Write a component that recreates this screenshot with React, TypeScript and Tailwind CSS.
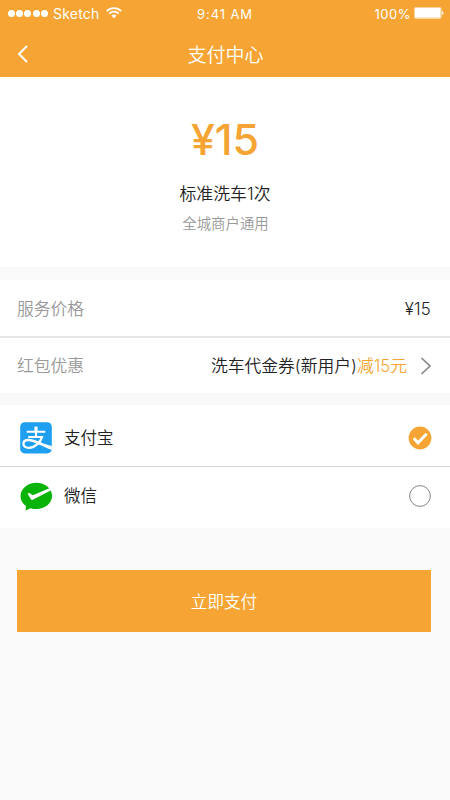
import type { ReactNode } from "react";

function Wifi() {
  return (
    <svg width="16" height="12" viewBox="0 0 16 12" fill="none" stroke="#fff" strokeWidth="1.8">
      <path d="M0.8 4.1a10.2 10.2 0 0 1 14.4 0" />
      <path d="M3.2 6.7a6.8 6.8 0 0 1 9.6 0" />
      <path d="M8 11.2 5.5 8.8a3.6 3.6 0 0 1 5 0z" fill="#fff" stroke="none" />
    </svg>
  );
}

function Battery() {
  return (
    <svg width="30" height="12" viewBox="0 0 30 12">
      <rect x="0.4" y="0.4" width="26.8" height="11" rx="1.6" fill="none" stroke="#fff" strokeWidth="0.8" opacity="0.75" />
      <rect x="1" y="1" width="25.6" height="9.8" rx="0.8" fill="#fff" />
      <path d="M28.1 4v4a2.1 2.1 0 0 0 0-4z" fill="#fff" />
    </svg>
  );
}

function Alipay() {
  return (
    <svg width="32" height="32" viewBox="0 0 32 32" fill="none">
      <rect x="0.2" y="0.2" width="31.6" height="31.2" rx="4.5" fill="#1f9ff0" />
      <path d="M6.7 9.8h18.6M8.2 15h14.4M16 9.8V15" stroke="#fff" strokeWidth="2.1" />
      <path d="M16 4.6v5.4" stroke="#fff" strokeWidth="3.2" />
      <path d="M22.4 14C21 19.4 15.4 25.8 8.8 25.8c-3.6 0-5.4-1.8-5.4-4 0-2.4 2.1-3.8 4.9-3.8 4 0 8.4 2 13.6 4.3" stroke="#fff" strokeWidth="2.3" />
      <path d="M18.2 19.4c4.2 1.8 8.8 3.3 13.6 4.5v4c-5.3-1.6-10.3-4.2-15.3-6.8z" fill="#fff" />
    </svg>
  );
}

function WeChat() {
  return (
    <svg width="33" height="29" viewBox="0 0 33 29">
      <path d="M16.3 0.7C7.6 0.7.5 6.7.5 14c0 4.1 2.1 7.6 5.5 10.1L5.5 28.5l5.2-2.3c1.8.6 3.6.9 5.6.9 8.7 0 15.8-6 15.8-13.3S25 .7 16.3.7z" fill="#09b307" />
      <path d="M7.7 11.8c.4-.9 1.2-1.2 2.1-.6l3 2.1L29.4 6.2l1.7 2L13.3 17.6c-1.2.7-2 .5-2.6-.7z" fill="#fff" />
    </svg>
  );
}

function Checked() {
  return (
    <svg width="24" height="24" viewBox="0 0 24 24">
      <circle cx="12" cy="12" r="11.4" fill="#f6a534" />
      <path d="m5.8 12.3 4.2 4.5 8.7-9.1" fill="none" stroke="#fff" strokeWidth="3" />
    </svg>
  );
}

function Unchecked() {
  return (
    <svg width="24" height="24" viewBox="0 0 24 24">
      <circle cx="12" cy="12" r="10.4" fill="none" stroke="#888" strokeWidth="1" />
    </svg>
  );
}

function PayOption({ icon, name, mark }: { icon: ReactNode; name: string; mark: ReactNode }) {
  return (
    <div className="flex h-[58px] items-center pr-[18px] pl-5">
      <div className="flex h-8 w-11 shrink-0 items-center">{icon}</div>
      <span className="flex-1 text-[16.5px] text-[#222]">{name}</span>
      {mark}
    </div>
  );
}

export default function App() {
  return (
    <div className="h-[800px] w-[450px] overflow-hidden bg-[#f9f9f9] font-['Inter','Noto_Sans_CJK_SC',sans-serif] leading-none font-[350]">
      <header className="h-[77px] bg-[#f6a534] text-white">
        <div className="grid h-[27px] grid-cols-3 items-center text-[13px] font-normal">
          <div className="flex items-center pl-[7.5px]">
            <div className="flex gap-[1.4px]">
              {[0, 1, 2, 3, 4].map((i) => (
                <i key={i} className="block size-[7px] rounded-full bg-white" />
              ))}
            </div>
            <span className="ml-[5px] pt-px text-[14px] tracking-[0.2px]">Sketch</span>
            <span className="ml-1.5 -mt-0.5"><Wifi /></span>
          </div>
          <span className="pt-px text-center tracking-[0.9px]">9:41 AM</span>
          <div className="flex items-center justify-end gap-[3px] pr-1.5">
            <span className="pt-px tracking-[0.5px]">100%</span>
            <span className="-mt-0.5"><Battery /></span>
          </div>
        </div>
        <div className="grid h-[54px] grid-cols-[40px_1fr_40px] items-center">
          <svg className="ml-4" width="13" height="18" viewBox="0 0 13 18" fill="none" stroke="#fff" strokeWidth="2">
            <path d="m11 1-8 8 8 8" />
          </svg>
          <h1 className="pt-0.5 pl-px text-center text-[19px]">支付中心</h1>
        </div>
      </header>

      <section className="flex h-[190px] flex-col items-center bg-white">
        <div className="mt-[41px] text-[43px] font-medium tracking-[-0.1px] text-[#f6a534]">¥15</div>
        <div className="mt-[25px] text-[16.9px] text-[#222]">标准洗车1次</div>
        <div className="mt-[14px] pl-px text-[14.4px] text-[#999]">全城商户通用</div>
      </section>

      <section className="mt-[13px] h-[113px] bg-white text-[16.8px] text-[#222]">
        <div className="flex h-[58px] items-center justify-between border-b-2 border-[#e6e6e6] pr-[19px] pl-[17px]">
          <span className="pt-0.5 text-[#999]">服务价格</span>
          <span className="pt-0.5 tracking-[0.2px]">¥15</span>
        </div>
        <div className="flex h-[55px] items-center pr-[18px] pl-[17px]">
          <span className="flex-1 pt-0.5 text-[#999]">红包优惠</span>
          <span className="pt-0.5">洗车代金券(新用户)</span>
          <span className="pt-0.5 text-[#f6a534]">减15元</span>
          <svg className="ml-[13px]" width="12" height="18" viewBox="0 0 12 18" fill="none" stroke="#888" strokeWidth="1.7">
            <path d="m1.5 1 8.5 8-8.5 8" />
          </svg>
        </div>
      </section>

      <section className="mt-3 h-[123px] bg-white">
        <div className="h-[61px] pt-1">
          <PayOption icon={<Alipay />} name="支付宝" mark={<Checked />} />
        </div>
        <div className="border-t border-[#d5d5d5]">
          <PayOption icon={<WeChat />} name="微信" mark={<Unchecked />} />
        </div>
      </section>

      <button className="mx-[17px] mt-[42px] flex h-[62px] w-[414px] items-center justify-center bg-[#f6a534] pt-0.5 text-[16.6px] text-white">
        立即支付
      </button>
    </div>
  );
}
